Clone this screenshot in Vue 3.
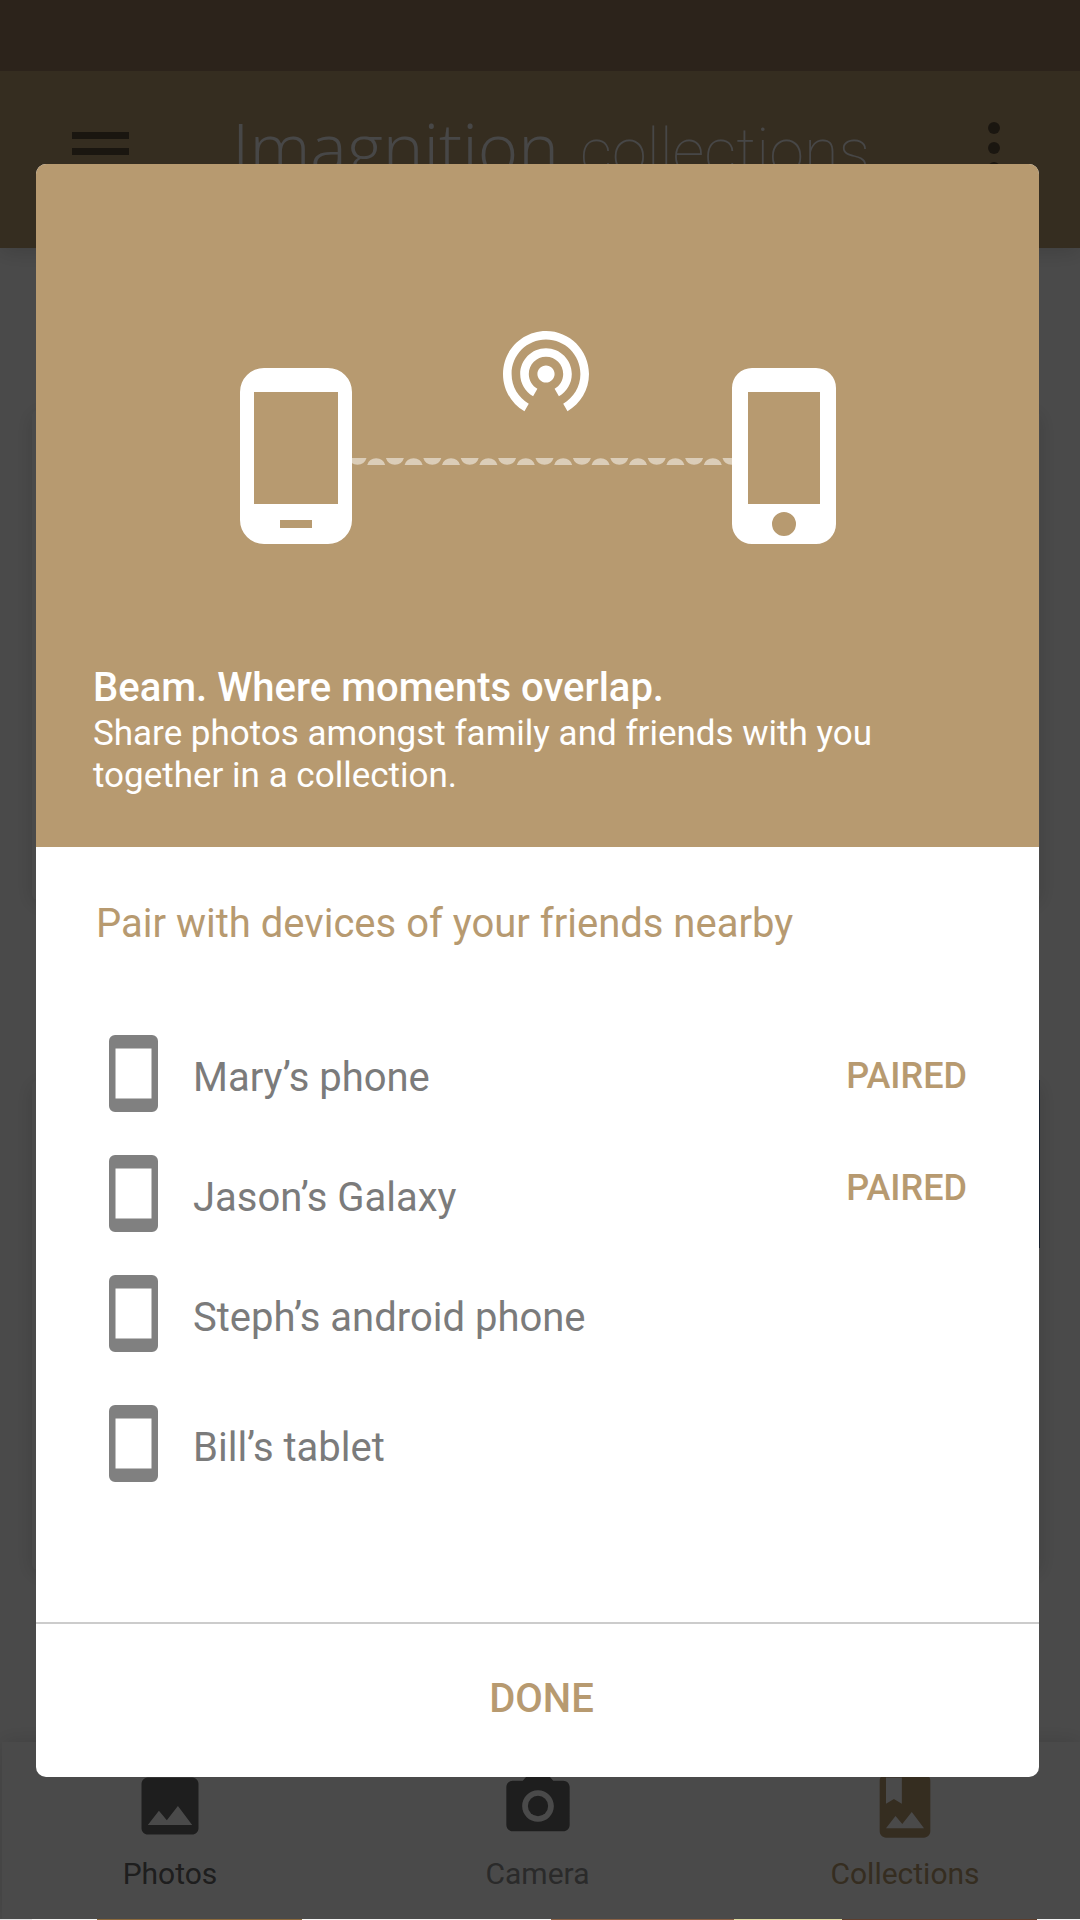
<script setup>
const devices = [
  { name: 'Mary’s phone', kind: 'phone' },
  { name: 'Jason’s Galaxy', kind: 'phone' },
  { name: 'Steph’s android phone', kind: 'phone' },
  { name: 'Bill’s tablet', kind: 'tablet' },
]
const paired = ['Mary’s phone', 'Jason’s Galaxy']

// Alternating caps of the beam between the two handsets
const caps = Array.from({ length: 21 }, (_, i) => {
  const x = Math.round((117.5 + i * 18.7) * 10) / 10
  return i % 2 === 0
    ? `M${x - 9} 127h18a9.4 9.4 0 0 1-18 0z`
    : `M${x - 9} 134h18a9.4 9.4 0 0 0-18 0z`
}).join('')
</script>

<template>
  <div class="screen">
    <div class="app">
      <div class="status-bar"></div>
      <header class="app-bar">
        <button class="icon-button menu" aria-label="Menu">
          <svg width="57" height="40" viewBox="0 0 57 40"><path d="M0 0h57v7H0zM0 16h57v7H0zM0 32h57v7H0z" /></svg>
        </button>
        <h1 class="brand"><span class="brand-name">Imagnition</span> collections</h1>
        <button class="icon-button" aria-label="More options">
          <svg width="14" height="54" viewBox="0 0 14 54"><circle cx="7" cy="7" r="6" /><circle cx="7" cy="27" r="6" /><circle cx="7" cy="47" r="6" /></svg>
        </button>
      </header>
      <main class="feed">
        <article class="tile"></article>
        <article class="tile"><div class="tile-photo"></div></article>
        <article class="tile"></article>
      </main>
      <nav class="tabs">
        <a class="tab" href="#photos">
          <svg class="tab-icon" viewBox="0 0 24 24"><path d="M21 19V5c0-1.100-.9-2-2-2H5c-1.100 0-2 .9-2 2v14c0 1.100.9 2 2 2h14c1.100 0 2-.9 2-2zM8.500 13.500l2.500 3.010L14.500 12l4.500 6H5l3.500-4.500z" /></svg>
          <span>Photos</span>
        </a>
        <a class="tab camera" href="#camera">
          <svg class="tab-icon" viewBox="0 0 24 24"><circle cx="12" cy="12" r="3.200" /><path d="M9 2L7.170 4H4c-1.100 0-2 .9-2 2v12c0 1.100.9 2 2 2h16c1.100 0 2-.9 2-2V6c0-1.100-.9-2-2-2h-3.170L15 2H9zm3 15c-2.760 0-5-2.240-5-5s2.240-5 5-5 5 2.240 5 5-2.240 5-5 5z" /></svg>
          <span>Camera</span>
        </a>
        <a class="tab active" href="#collections">
          <svg class="tab-icon" viewBox="0 0 24 24"><path d="M18 2H6c-1.100 0-2 .9-2 2v16c0 1.100.9 2 2 2h12c1.100 0 2-.9 2-2V4c0-1.100-.9-2-2-2zM6 3h5v8.300L8.500 9.800 6 11.300V3zm0 16l3-3.860 2.140 2.580 3-3.860L18 19H6z" /></svg>
          <span>Collections</span>
        </a>
      </nav>
      <div class="page-edge"></div>
    </div>

    <div class="overlay">
      <section class="dialog" role="dialog" aria-modal="true" aria-labelledby="beam-title">
        <div class="hero">
          <svg class="beam-art" width="596" height="213" viewBox="0 0 596 213" aria-hidden="true">
            <path :d="caps" fill="#dbcdb8" />
            <g fill="#fff" fill-rule="evenodd">
              <path d="M24 37h64a24 24 0 0 1 24 24v128a24 24 0 0 1-24 24H24a24 24 0 0 1-24-24V61a24 24 0 0 1 24-24zM14 61v112h84V61zM40 189v8h32v-8z" />
              <path d="M512 37h64a20 20 0 0 1 20 20v136a20 20 0 0 1-20 20h-64a20 20 0 0 1-20-20V57a20 20 0 0 1 20-20zM508 61v112h72V61zM532 193a12 12 0 1 0 24 0a12 12 0 1 0-24 0z" />
              <path transform="translate(254.4 -12.900) scale(4.300)" d="M12 11c-1.100 0-2 .9-2 2s.9 2 2 2 2-.9 2-2-.9-2-2-2zm6 2c0-3.310-2.690-6-6-6s-6 2.690-6 6c0 2.220 1.210 4.150 3 5.190l1-1.740c-1.190-.7-2-1.970-2-3.450 0-2.210 1.790-4 4-4s4 1.790 4 4c0 1.480-.81 2.750-2 3.450l1 1.740c1.790-1.040 3-2.970 3-5.190zM12 3C6.480 3 2 7.480 2 13c0 3.700 2.010 6.920 4.990 8.650l1-1.730C5.610 18.530 4 15.960 4 13c0-4.420 3.580-8 8-8s8 3.580 8 8c0 2.960-1.610 5.530-4 6.920l1 1.730c2.990-1.730 5-4.950 5-8.650 0-5.520-4.480-10-10-10z" />
            </g>
          </svg>
          <h2 id="beam-title" class="hero-title">Beam. Where moments overlap.</h2>
          <p class="hero-text">Share photos amongst family and friends with you together in a collection.</p>
        </div>

        <div class="body">
          <h3 class="prompt">Pair with devices of your friends nearby</h3>
          <div class="pairing">
            <ul class="devices">
              <li v-for="device in devices" :key="device.name" :class="['device', device.kind]">
                <svg width="49" height="77" viewBox="0 0 49 77" aria-hidden="true">
                  <path fill="#808080" fill-rule="evenodd" d="M6 0h37a6 6 0 0 1 6 6v65a6 6 0 0 1-6 6H6a6 6 0 0 1-6-6V6a6 6 0 0 1 6-6zM6.500 13.500v50h36v-50z" />
                </svg>
                <span>{{ device.name }}</span>
              </li>
            </ul>
            <div class="states">
              <button v-for="name in paired" :key="name" class="state" :aria-label="`${name}: paired`">PAIRED</button>
            </div>
          </div>
        </div>

        <button class="done">DONE</button>
      </section>
    </div>
  </div>
</template>

<style>
body {
  margin: 0;
}
</style>

<style scoped>
.screen {
  --tan: #b79a70;
  position: relative;
  font-family: Roboto, "Noto Sans", sans-serif;
}

button {
  border: 0;
  padding: 0;
  background: none;
  font-family: inherit;
  cursor: pointer;
}

h1,
h2,
h3,
p,
ul {
  margin: 0;
  padding: 0;
}

svg {
  display: block;
  flex: none;
}

.app {
  display: flex;
  flex-direction: column;
  height: 100vh;
  min-height: 1840px;
  overflow: hidden;
  background: #fff;
}

.status-bar {
  flex: none;
  height: 71px;
  background: #98795d;
}

.app-bar {
  position: relative;
  z-index: 1;
  flex: none;
  box-sizing: border-box;
  display: flex;
  align-items: flex-start;
  height: 177px;
  padding: 50px 79px 0 72px;
  background: var(--tan);
  box-shadow: 0 4px 20px rgba(0, 0, 0, 0.15);
  clip-path: inset(0 0 -40px);
}

.icon-button {
  fill: rgba(0, 0, 0, 0.5);
}

.menu {
  padding-top: 11px;
}

.brand {
  margin: 0 auto 0 103px;
  color: #f4f4f4;
  font-size: 63px;
  font-weight: 100;
  line-height: 50px;
  white-space: nowrap;
}

.brand-name {
  margin-right: 6px;
  font-family: "Roboto Slab", "Open Sans", sans-serif;
  font-size: 69px;
  font-weight: 300;
}

.feed {
  flex: 1;
  min-height: 0;
  overflow: hidden;
  display: flex;
  flex-direction: column;
  gap: 180px;
  padding: 162px 40px 0 32px;
}

.tile {
  flex: none;
  height: 490px;
  border-radius: 6px;
  background: #fff;
  box-shadow: 0 4px 20px rgba(0, 0, 0, 0.15);
}

.tile-photo {
  height: 168px;
  margin-left: 50%;
  background: #54749a;
}

.tabs {
  position: relative;
  flex: none;
  box-sizing: border-box;
  display: flex;
  justify-content: space-between;
  height: 177px;
  margin-left: 2px;
  padding: 26px 101px 0 94px;
  background: #fff;
  box-shadow: 0 0 20px rgba(0, 0, 0, 0.15);
}

.tab {
  display: flex;
  flex-direction: column;
  align-items: center;
  gap: 12px;
  width: 148px;
  color: #676767;
  font-size: 30px;
  line-height: 36px;
  text-decoration: none;
}

.tab-icon {
  width: 76px;
  height: 76px;
  fill: #676767;
}

.camera {
  color: #909090;
}

.active {
  color: var(--tan);
}

.active .tab-icon {
  fill: var(--tan);
}

.page-edge {
  position: relative;
  flex: none;
  height: 1px;
  background: linear-gradient(90deg, #e4e4e4 3%, #f8f8f6 3% 9%, #8c6a3c 9% 28%, #f8f8f6 28% 51%, #8a6145 51% 68%, #e0dba0 68% 78%, #5f3e2c 78% 96%, #f4f4f4 96%);
}

.overlay {
  position: absolute;
  inset: 0 0 1px;
  z-index: 2;
  display: flex;
  align-items: flex-start;
  padding: 164px 41px 0 36px;
  background: rgba(0, 0, 0, 0.71);
}

.dialog {
  flex: 1;
  min-width: 0;
  display: flex;
  flex-direction: column;
  overflow: hidden;
  border-radius: 10px;
  background: #fff;
}

.hero {
  padding: 167px 57px 50px;
  background: var(--tan);
  color: #fff;
}

.beam-art {
  margin: 0 auto 119px;
}

.hero-title {
  font-size: 40px;
  font-weight: 500;
  line-height: 50px;
}

.hero-text {
  max-width: 800px;
  font-size: 35px;
  line-height: 42px;
}

.body {
  padding: 53px 72px 140px 73px;
}

.prompt {
  margin-left: -13px;
  color: var(--tan);
  font-size: 40px;
  font-weight: 400;
  line-height: 48px;
}

.pairing {
  display: flex;
  justify-content: space-between;
  padding-top: 87px;
}

.devices {
  display: flex;
  flex-direction: column;
  gap: 43px;
  list-style: none;
}

.device {
  display: flex;
  align-items: flex-end;
  gap: 35px;
  color: #7b7b7b;
  font-size: 40px;
  line-height: 68px;
}

.tablet {
  padding-top: 10px;
}

.states {
  display: flex;
  flex-direction: column;
  gap: 70px;
  padding-top: 20px;
}

.state {
  color: var(--tan);
  font-size: 36px;
  font-weight: 500;
  line-height: 42px;
}

.done {
  height: 155px;
  padding: 0 0 4px 8px;
  border-top: 2px solid #ccc;
  color: var(--tan);
  font-size: 40px;
  font-weight: 500;
}
</style>
